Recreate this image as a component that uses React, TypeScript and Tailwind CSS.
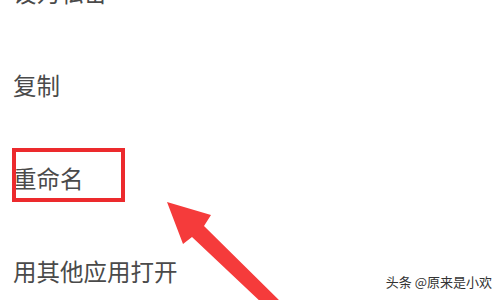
import React from 'react';

const items = ['设为私密', '复制', '重命名', '用其他应用打开'];

const App = () => {
  return (
    <div
      className="relative w-[500px] h-[300px] overflow-hidden bg-white"
      style={{ fontFamily: '"Noto Sans CJK SC", "Noto Sans", sans-serif' }}
    >
      <ul className="mt-[-54px] pl-[13px]">
        {items.map((label) => (
          <li key={label} className="h-[93px] flex items-center text-[23.5px] text-[#4a4a4a]">
            {label}
          </li>
        ))}
      </ul>

      {/* highlight box around 重命名 */}
      <div className="absolute left-[12px] top-[148px] w-[113px] h-[54px] border-4 border-[#ec2a2d]" />

      {/* arrow */}
      <svg className="absolute left-0 top-0" width="500" height="300" viewBox="0 0 500 300">
        <polygon
          points="167,202 211,215 204,226 283,304 263,304 192,237 183,244"
          fill="#f53b3b"
        />
      </svg>

      <div className="absolute right-[8px] bottom-[9px] text-[13px] text-[#333] [text-shadow:0_0_2px_#fff]">
        头条 @原来是小欢
      </div>
    </div>
  );
};

export default App;
